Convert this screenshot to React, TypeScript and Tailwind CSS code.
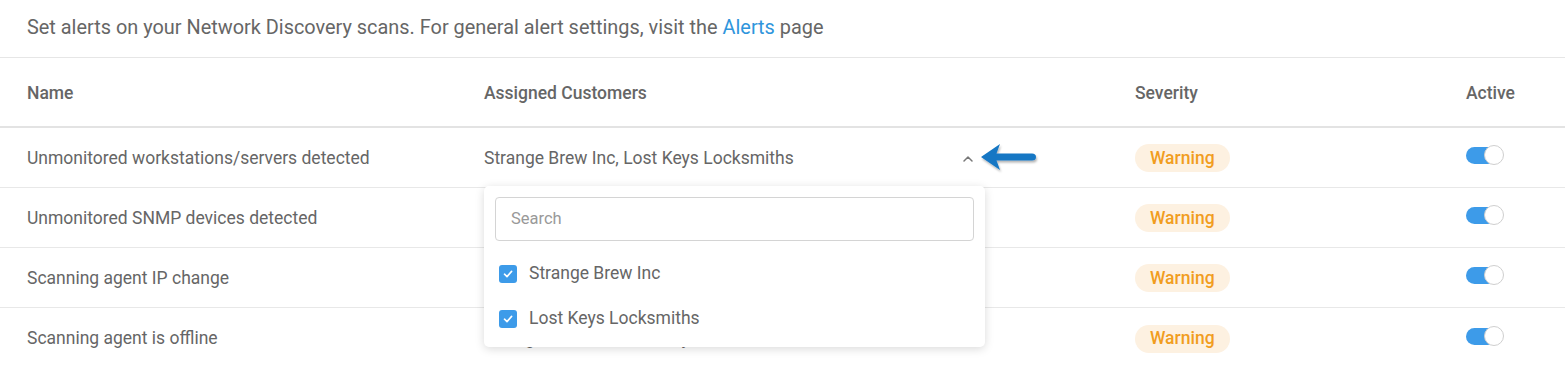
import React from "react";

const rows = [
  "Unmonitored workstations/servers detected",
  "Unmonitored SNMP devices detected",
  "Scanning agent IP change",
  "Scanning agent is offline",
];

function Toggle() {
  return (
    <div className="relative h-[20px] w-[40px]">
      <div className="absolute left-0 top-[2px] h-[17px] w-[30px] rounded-full bg-[#3d9be9]" />
      <div className="absolute left-[18px] top-0 h-[20px] w-[20px] rounded-full border border-[#cfcfcf] bg-white" />
    </div>
  );
}

function Check() {
  return (
    <div className="flex h-[18px] w-[18px] items-center justify-center rounded-[3px] bg-[#3d9be9]">
      <svg width="12" height="12" viewBox="0 0 12 12" fill="none">
        <path d="M2.5 6.2 L5 8.6 L9.6 3.4" stroke="white" strokeWidth="1.6" strokeLinecap="round" strokeLinejoin="round" />
      </svg>
    </div>
  );
}

export default function App() {
  return (
    <div className="h-[365px] w-[1565px] overflow-hidden bg-white text-[#666]" style={{ fontFamily: "Roboto, 'Liberation Sans', sans-serif" }}>
      <div className="flex h-[58px] items-center border-b border-[#e6e6e6] pl-[27px] pb-[2px] text-[19.9px]">
        <span>
          Set alerts on your Network Discovery scans. For general alert settings, visit the{" "}
          <span className="text-[#2f95dc]">Alerts</span> page
        </span>
      </div>
      <div className="grid h-[70px] grid-cols-[457px_651px_331px_1fr] items-center border-b-2 border-[#e3e3e3] pl-[27px] pt-[2px] text-[17.5px] font-medium">
        <div>Name</div>
        <div>Assigned Customers</div>
        <div>Severity</div>
        <div>Active</div>
      </div>
      {rows.map((name, i) => (
        <div
          key={name}
          className={`grid h-[60px] grid-cols-[457px_651px_331px_1fr] items-center pl-[27px] pt-[1px] text-[17.5px] ${i < rows.length - 1 ? "border-b border-[#e8e8e8]" : ""}`}
        >
          <div>{name}</div>
          <div className="relative flex h-full items-center">
            {(i === 0 || i === 3) && <span>Strange Brew Inc, Lost Keys Locksmiths</span>}
            {i === 0 && (
              <>
                <svg className="absolute left-[478px] top-[26px]" width="12" height="8" viewBox="0 0 12 8" fill="none">
                  <path d="M2 6 L6 2 L10 6" stroke="#777" strokeWidth="1.5" strokeLinecap="round" strokeLinejoin="round" />
                </svg>
                <svg className="absolute left-[495px] top-[12px]" width="62" height="36" viewBox="0 0 62 36" fill="none">
                  <defs>
                    <filter id="sh" x="-20%" y="-30%" width="140%" height="160%">
                      <feDropShadow dx="1" dy="2" stdDeviation="1.2" floodColor="#000" floodOpacity="0.3" />
                    </filter>
                  </defs>
                  <g filter="url(#sh)">
                    <path d="M2 16 L21 3 L17.5 12.5 L53 12.5 Q57 12.5 57 16 Q57 19.5 53 19.5 L17.5 19.5 L21 29 Z" fill="#1677c4" />
                  </g>
                </svg>
                <div className="absolute left-0 top-[57px] z-10 w-[501px] rounded-[5px] bg-white px-[11px] pb-[6px] pt-[11px] shadow-[0_2px_10px_rgba(0,0,0,0.15)]">
                  <div className="flex h-[44px] items-center rounded-[4px] border border-[#d4d4d4] px-[15px] text-[16.5px] text-[#999]">
                    Search
                  </div>
                  <div className="mt-[10px] flex h-[45px] items-center gap-[12px] pl-[4px] text-[#666]">
                    <Check />
                    <span>Strange Brew Inc</span>
                  </div>
                  <div className="flex h-[45px] items-center gap-[12px] pl-[4px] text-[#666]">
                    <Check />
                    <span>Lost Keys Locksmiths</span>
                  </div>
                </div>
              </>
            )}
          </div>
          <div>
            <span className="inline-flex h-[28px] items-center rounded-full bg-[#fdf1e1] px-[15px] text-[17.5px] font-medium text-[#f19d1f]">
              Warning
            </span>
          </div>
          <div className="-mt-[6px]">
            <Toggle />
          </div>
        </div>
      ))}
    </div>
  );
}
